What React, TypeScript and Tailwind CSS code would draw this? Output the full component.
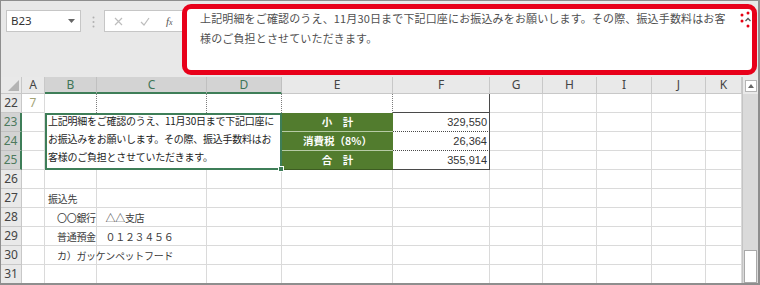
import React from 'react';

const COLS = ['A', 'B', 'C', 'D', 'E', 'F', 'G', 'H', 'I', 'J', 'K'];
const ROWS = [22, 23, 24, 25, 26, 27, 28, 29, 30, 31];
const SEL_COLS = ['B', 'C', 'D'];
const SEL_ROWS = [23, 24, 25];

const jp = "font-['Noto_Sans_CJK_JP','Noto_Sans',sans-serif]";
const ui = "font-['Noto_Sans','Noto_Sans_CJK_JP',sans-serif]";

const gridLine = 'border-r border-b border-[#dadada]';
const dotted = 'border-r border-dotted border-[#7c7c7c]';
const green =
  "bg-[#527c2e] border-b border-[#b7cba5] flex items-center justify-center text-white font-bold text-[10.5px] font-['Noto_Sans_CJK_JP',sans-serif]";
const greenLast =
  "bg-[#527c2e] border-b border-[#3d5c22] flex items-center justify-center text-white font-bold text-[10.5px] font-['Noto_Sans_CJK_JP',sans-serif]";
const amount =
  "border-r border-b border-[#4a4a4a] [border-bottom-style:dotted] flex items-center justify-end pr-[2px] text-[11px] text-[#333] font-['Liberation_Sans',sans-serif]";
const amountLast =
  "border-r border-b border-[#4a4a4a] flex items-center justify-end pr-[2px] text-[11px] text-[#333] font-['Liberation_Sans',sans-serif]";
const note =
  "border-r border-b border-[#dadada] flex items-center whitespace-nowrap text-[10px] tracking-[-0.3px] text-[#3a3a3a] font-['Noto_Sans_CJK_JP',sans-serif]";

const cellStyle: Record<string, string> = {
  B22: dotted,
  C22: dotted,
  D22: dotted,
  E22: dotted,
  F22: 'border-r border-b border-[#4a4a4a]',
  E23: green,
  E24: green,
  E25: greenLast,
  F23: amount,
  F24: amount,
  F25: amountLast,
  B27: note + ' pl-[3px]',
  B28: note + ' pl-[12px]',
  B29: note + ' pl-[12px]',
  B30: note + ' pl-[12px]',
  A22: "border-r border-b border-[#dadada] flex items-center justify-center text-[12px] text-[#a3a374] font-['Noto_Sans',sans-serif]",
};

const content: Record<string, React.ReactNode> = {
  A22: '7',
  E23: '小　計',
  E24: '消費税（8%）',
  E25: '合　計',
  F23: '329,550',
  F24: '26,364',
  F25: '355,914',
  B27: '振込先',
  B28: '〇〇銀行　△△支店',
  B29: '普通預金　０１２３４５６',
  B30: 'カ）ガッケンペットフード',
};

function Collapse() {
  return (
    <svg width="18" height="18" viewBox="0 0 18 18" className="absolute right-[-5px] top-[2px]">
      <circle cx="9" cy="2" r="1.5" fill="#e60012" />
      <circle cx="15" cy="4" r="1.5" fill="#e60012" />
      <circle cx="16" cy="10" r="1.5" fill="#e60012" />
      <circle cx="9" cy="15" r="1.5" fill="#e60012" />
      <circle cx="3" cy="10" r="1.5" fill="#e60012" />
      <circle cx="3" cy="4" r="1.5" fill="#e60012" />
      <path d="M6.5 10 L9 7.5 L11.5 10" fill="none" stroke="#555" strokeWidth="1.3" />
    </svg>
  );
}

function Toolbar() {
  return (
    <div className="h-[76px] flex items-start shrink-0">
      {/* Name box */}
      <div className="ml-[5px] mt-[9px] w-[75px] h-[22px] bg-white border border-[#c6c6c6] flex items-center justify-between pl-[4px] pr-[5px]">
        <span className={`text-[11.5px] text-[#333] ${ui}`}>B23</span>
        <svg width="7" height="4" viewBox="0 0 7 4">
          <path d="M0 0 H7 L3.5 4 Z" fill="#666" />
        </svg>
      </div>
      {/* grip */}
      <svg width="3" height="12" viewBox="0 0 3 12" className="ml-[11px] mt-[15px]">
        <circle cx="1.5" cy="1.5" r="1" fill="#b0b0b0" />
        <circle cx="1.5" cy="6" r="1" fill="#b0b0b0" />
        <circle cx="1.5" cy="10.5" r="1" fill="#b0b0b0" />
      </svg>
      {/* cancel / enter / fx */}
      <div className="ml-[9px] mt-[9px] w-[78px] h-[22px] bg-white border border-[#c6c6c6] border-r-0 flex items-center">
        <svg width="9" height="9" viewBox="0 0 9 9" className="ml-[9px]">
          <path d="M1 1 L8 8 M8 1 L1 8" stroke="#bdbdbd" strokeWidth="1.2" />
        </svg>
        <svg width="10" height="9" viewBox="0 0 10 9" className="ml-[17px]">
          <path d="M1 5 L4 8 L9 1" fill="none" stroke="#bdbdbd" strokeWidth="1.2" />
        </svg>
        <span className="ml-[16px] text-[11px] italic text-[#555] font-['Liberation_Serif',serif] leading-none">
          f<span className="text-[8px]">x</span>
        </span>
      </div>
      {/* expanded formula bar with red highlight */}
      <div className="mt-[3px] w-[575px] h-[71px] border-[5px] border-[#e8001a] rounded-[9px] bg-white relative pl-[13px]">
        <div className={`text-[11px] leading-[19.5px] tracking-[0.15px] text-[#505050] whitespace-nowrap ${jp}`}>
          <div>上記明細をご確認のうえ、11月30日まで下記口座にお振込みをお願いします。その際、振込手数料はお客</div>
          <div>様のご負担とさせていただきます。</div>
        </div>
        <Collapse />
      </div>
    </div>
  );
}

function Sheet() {
  return (
    <div className="flex flex-1 min-h-0">
      <div className="w-[741px] grid grid-cols-[21px_23px_52px_110px_75px_111px_97px_53px_54px_55px_54px_36px] grid-rows-[17px_repeat(10,19px)] bg-white overflow-hidden">
        {/* corner */}
        <div className="bg-[#e9e9e9] border-r border-b border-[#c8c8c8] flex items-end justify-end p-[2px]">
          <svg width="11" height="11" viewBox="0 0 11 11">
            <path d="M11 0 V11 H0 Z" fill="#b4b4b4" />
          </svg>
        </div>
        {COLS.map((c) =>
          SEL_COLS.includes(c) ? (
            <div
              key={c}
              className={`bg-[#d3d3d3] border-r border-[#c0c0c0] border-b-2 border-b-[#3e7e58] flex items-center justify-center text-[12px] text-[#3e7557] ${ui}`}
            >
              {c}
            </div>
          ) : (
            <div
              key={c}
              className={`bg-[#e9e9e9] border-r border-b border-[#c8c8c8] flex items-center justify-center text-[12px] text-[#444] ${ui}`}
            >
              {c}
            </div>
          )
        )}
        {ROWS.map((r) => (
          <React.Fragment key={r}>
            {SEL_ROWS.includes(r) ? (
              <div
                className={`bg-[#d3d3d3] border-b border-[#c0c0c0] border-r-2 border-r-[#3e7e58] flex items-center justify-center text-[12px] text-[#4d7a5e] ${ui}`}
              >
                {r}
              </div>
            ) : (
              <div
                className={`bg-[#e9e9e9] border-r border-b border-[#c8c8c8] flex items-center justify-center text-[12px] text-[#444] ${ui}`}
              >
                {r}
              </div>
            )}
            {COLS.map((c) => {
              if (SEL_ROWS.includes(r) && SEL_COLS.includes(c)) {
                if (r === 23 && c === 'B') {
                  return (
                    <div
                      key={c}
                      className="col-span-3 row-span-3 border-2 border-[#3e7e58] bg-white relative"
                    >
                      <div
                        className={`-mt-[3px] pl-[1px] text-[10px] leading-[17.8px] tracking-[-0.25px] text-[#222] whitespace-nowrap ${jp}`}
                      >
                        <div>上記明細をご確認のうえ、11月30日まで下記口座に</div>
                        <div>お振込みをお願いします。その際、振込手数料はお</div>
                        <div>客様のご負担とさせていただきます。</div>
                      </div>
                      <div className="absolute -right-[4px] -bottom-[4px] w-[6px] h-[6px] bg-[#3e7e58] border border-white" />
                    </div>
                  );
                }
                return null;
              }
              const id = `${c}${r}`;
              return (
                <div key={c} className={cellStyle[id] ?? gridLine}>
                  {content[id]}
                </div>
              );
            })}
          </React.Fragment>
        ))}
      </div>
      {/* vertical scrollbar */}
      <div className="w-[16px] flex flex-col bg-[#dadada] border-l border-[#c4c4c4]">
        <div className="h-[17px] bg-[#e9e9e9] flex items-center justify-center">
          <div className="w-[12px] h-[12px] bg-white border border-[#b5b5b5] flex items-center justify-center">
            <svg width="6" height="4" viewBox="0 0 6 4">
              <path d="M0 4 L3 0 L6 4 Z" fill="#666" />
            </svg>
          </div>
        </div>
        <div className="flex-1 flex flex-col justify-end px-[1px]">
          <div className="h-[33px] bg-white border border-[#a9a9a9]" />
        </div>
      </div>
    </div>
  );
}

export default function App() {
  return (
    <div className="w-[760px] h-[285px] overflow-hidden bg-[#e8e8e8] border-l border-t border-r-2 border-b-2 border-[#8e8e8e] flex flex-col">
      <Toolbar />
      <Sheet />
    </div>
  );
}
